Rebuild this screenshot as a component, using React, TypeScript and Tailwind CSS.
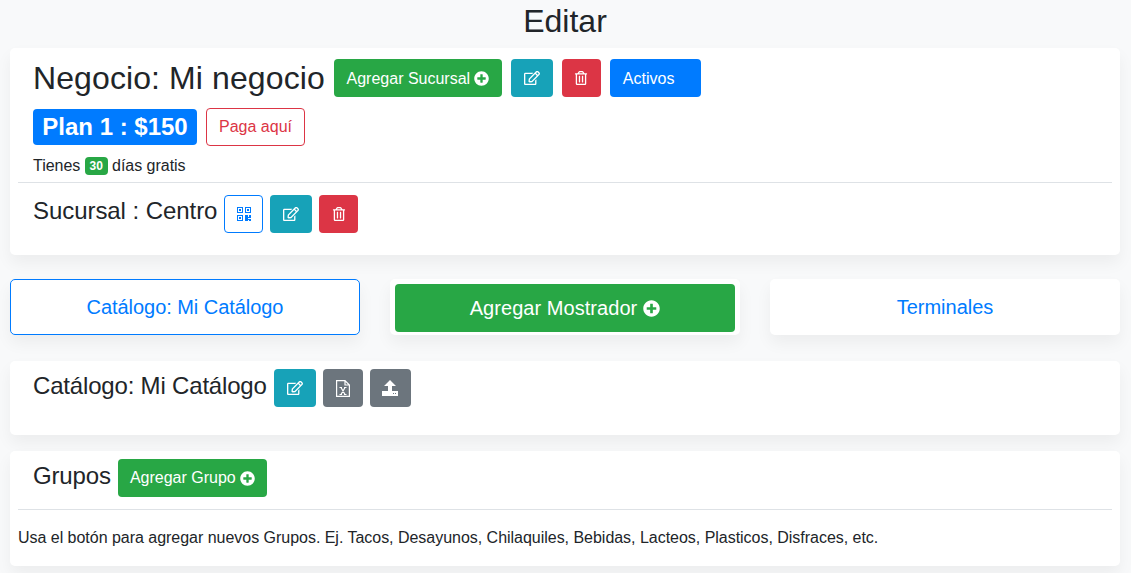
import { FaPlusCircle, FaRegEdit, FaRegTrashAlt } from "react-icons/fa";

const btn = "h-[38px] rounded-[4px] flex items-center justify-center text-white text-base";
const card = "bg-white rounded-[5px] shadow-[0_8px_16px_rgba(0,0,0,0.05)]";

function QrIcon() {
  return (
    <svg width="14" height="14" viewBox="0 0 14 14" fill="currentColor">
      <path fillRule="evenodd" d="M0 0h6v6H0zM1 1v4h4V1zM8 0h6v6H8zM9 1v4h4V1zM0 8h6v6H0zM1 9v4h4V9z" />
      <path d="M2 2h2v2H2zM10 2h2v2h-2zM2 10h2v2H2zM8 8h3v2h1V8h2v3h-3v1h3v2h-2v-1h-1v1H8z" />
    </svg>
  );
}

function ExcelIcon() {
  return (
    <svg width="14" height="17" viewBox="0 0 14 17" fill="none" stroke="currentColor" strokeWidth="1.2">
      <path d="M.6.6h8.4l4.4 4.4v11.4H.6zM9 .6V5h4.4" />
      <path d="M3.5 7.5h2.5M8 7.5h2.5M3.5 14.5h2.5M8 14.5h2.5M5 7.5l4 7M9 7.5l-4 7" />
    </svg>
  );
}

function UploadIcon() {
  return (
    <svg width="16" height="16" viewBox="0 0 16 16" fill="currentColor">
      <path d="M8 0l6 6h-4v5H6V6H2z" />
      <path fillRule="evenodd" d="M0 11h16v5H0zM11 13v1h1v-1zM13 13v1h1v-1z" />
    </svg>
  );
}

export default function App() {
  return (
    <div className="min-h-[573px] bg-[#f8f9fa] text-[#212529] font-['Liberation_Sans',Arial,sans-serif] pl-[10px] pr-[11px] overflow-hidden">
      <h1 className="h-[48px] text-[32px] leading-[43px] text-center">Editar</h1>

      <section className={`${card} h-[207px] px-2 pt-[11px]`}>
        <div className="flex items-center pl-[15px] h-[38px]">
          <h2 className="text-[32px] leading-[38px] mr-[9px] tracking-[0.1px]">Negocio: Mi negocio</h2>
          <button className={`${btn} w-[168px] bg-[#28a745] gap-[4px] pt-px`}>Agregar Sucursal <FaPlusCircle className="w-[15px] h-[15px]" /></button>
          <button className={`${btn} w-[42px] ml-[9px] bg-[#17a2b8]`}><FaRegEdit className="w-4 h-4" /></button>
          <button className={`${btn} w-[39px] ml-[9px] bg-[#dc3545]`}><FaRegTrashAlt className="w-[14px] h-[14px]" /></button>
          <button className={`${btn} w-[91px] ml-[9px] bg-[#007bff] justify-start pl-[13px] pt-px`}>Activos</button>
        </div>
        <div className="flex items-center pl-[15px] mt-[11px] h-[38px]">
          <span className="h-[36px] w-[164px] rounded-[4px] bg-[#007bff] text-white font-bold text-2xl flex items-center justify-center">Plan 1 : $150</span>
          <button className="h-[38px] w-[99px] ml-[9px] rounded-[4px] border border-[#dc3545] text-[#dc3545] text-base">Paga aquí</button>
        </div>
        <p className="pl-[15px] mt-[8px] h-[24px] text-base leading-[24px] flex items-center whitespace-pre tracking-[-0.03px]">
          Tienes <span className="w-[23px] h-[18px] rounded-[4px] bg-[#28a745] text-white text-xs font-bold flex items-center justify-center">30</span> días gratis
        </p>
        <hr className="mt-[4px] border-t border-[#dee2e6]" />
        <div className="flex pl-[15px] mt-[12px]">
          <h4 className="text-2xl leading-[31px] mr-[7px] tracking-[-0.06px]">Sucursal : Centro</h4>
          <button className={`${btn} w-[39px] border border-[#007bff] !text-[#007bff]`}><QrIcon /></button>
          <button className={`${btn} w-[42px] ml-[7px] bg-[#17a2b8]`}><FaRegEdit className="w-4 h-4" /></button>
          <button className={`${btn} w-[39px] ml-[7px] bg-[#dc3545]`}><FaRegTrashAlt className="w-[14px] h-[14px]" /></button>
        </div>
      </section>

      <div className="grid grid-cols-3 gap-[30px] mt-[24px]">
        <button className={`${card} h-[56px] border border-[#007bff] text-[#007bff] text-xl tracking-[-0.05px]`}>Catálogo: Mi Catálogo</button>
        <div className={`${card} h-[56px] p-[5px]`}>
          <button className="w-full h-[48px] rounded-[4px] bg-[#28a745] text-white text-xl flex items-center justify-center gap-[6px] tracking-[0.05px]">Agregar Mostrador <FaPlusCircle className="w-[17px] h-[17px]" /></button>
        </div>
        <button className={`${card} h-[56px] text-[#007bff] text-xl`}>Terminales</button>
      </div>

      <section className={`${card} h-[74px] mt-[26px] pt-[8px] pl-[23px] flex items-start`}>
        <h4 className="text-2xl leading-[34px] mr-[7px] tracking-[-0.18px]">Catálogo: Mi Catálogo</h4>
        <button className={`${btn} w-[42px] bg-[#17a2b8]`}><FaRegEdit className="w-4 h-4" /></button>
        <button className={`${btn} w-[40px] ml-[7px] bg-[#6c757d]`}><ExcelIcon /></button>
        <button className={`${btn} w-[41px] ml-[7px] bg-[#6c757d]`}><UploadIcon /></button>
      </section>

      <section className={`${card} h-[115px] mt-[16px] px-2 pt-[8px]`}>
        <div className="flex items-start pl-[15px]">
          <h4 className="text-2xl leading-[34px] mr-[7px] tracking-[-0.15px]">Grupos</h4>
          <button className={`${btn} w-[149px] bg-[#28a745] gap-[4px]`}>Agregar Grupo <FaPlusCircle className="w-[15px] h-[15px]" /></button>
        </div>
        <hr className="mt-[12px] border-t border-[#dee2e6]" />
        <p className="mt-[16px] text-base leading-[24px] tracking-[-0.025px]">Usa el botón para agregar nuevos Grupos. Ej. Tacos, Desayunos, Chilaquiles, Bebidas, Lacteos, Plasticos, Disfraces, etc.</p>
      </section>
    </div>
  );
}
